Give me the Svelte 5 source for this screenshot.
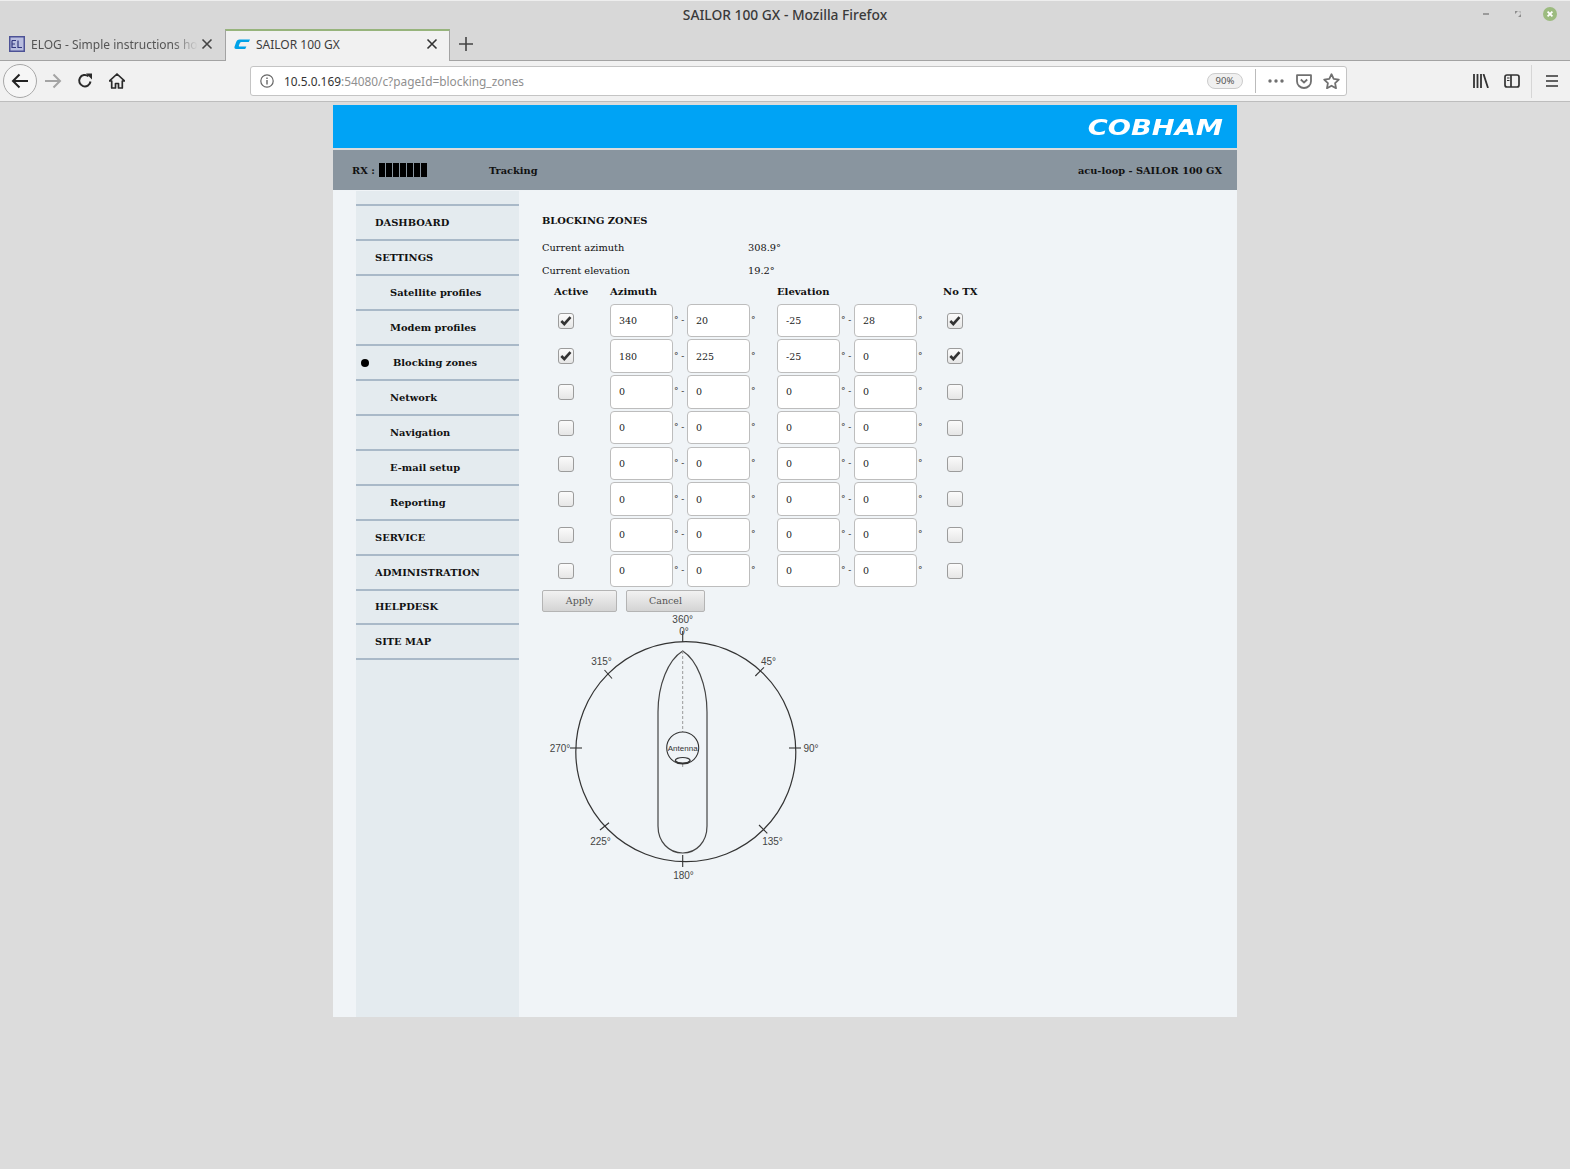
<script>
  const nav = [
    { label: 'DASHBOARD' }, { label: 'SETTINGS' },
    { label: 'Satellite profiles', sub: true }, { label: 'Modem profiles', sub: true },
    { label: 'Blocking zones', sub: true, current: true }, { label: 'Network', sub: true },
    { label: 'Navigation', sub: true }, { label: 'E-mail setup', sub: true },
    { label: 'Reporting', sub: true }, { label: 'SERVICE', tight: true }, { label: 'ADMINISTRATION', tight: true },
    { label: 'HELPDESK', tight: true }, { label: 'SITE MAP', tight: true }
  ];
  const rows = [
    { on: true, v: ['340', '20', '-25', '28'] },
    { on: true, v: ['180', '225', '-25', '0'] },
    ...Array.from({ length: 6 }, () => ({ on: false, v: ['0', '0', '0', '0'] }))
  ];
  const bars = [0, 1, 2, 3, 4, 5, 6];
  const labels = [
    ['360°', 682.7, 623], ['0°', 684, 635], ['315°', 601.5, 665], ['45°', 768.5, 665],
    ['270°', 560, 752], ['90°', 811, 752], ['225°', 600.5, 845], ['135°', 772.5, 845], ['180°', 683.5, 879]
  ];
  const ticks = [
    [682.7, 631, 682.7, 642], [682.7, 855, 682.7, 867], [570, 748, 582, 748], [789, 748, 801, 748],
    [604.5, 670, 612, 678.5], [755.3, 676, 764, 667.3], [759, 825, 767.3, 833.3], [600, 830, 609, 822.7]
  ];
</script>

<div class="chrome">
  <div class="titlebar">
    <span class="title">SAILOR 100 GX - Mozilla Firefox</span>
    <div class="winctl">
      <svg width="12" height="12" viewBox="0 0 12 12"><rect x="0" y="5" width="6" height="2" fill="#9a9a9a" transform="translate(3 0)"/></svg>
      <svg width="12" height="12" viewBox="0 0 12 12"><path d="M3 6V3h3zM9 6v3H6z" fill="#8d8d8d"/><path d="M6 3h3v3z" fill="#bbb"/></svg>
      <svg class="close" width="14" height="14" viewBox="0 0 14 14"><circle cx="7" cy="7" r="7" fill="#9cbb7f"/><path d="M4.6 4.6l4.8 4.8M9.4 4.6l-4.8 4.8" stroke="#fff" stroke-width="1.8"/></svg>
    </div>
  </div>
  <div class="tabs">
    <div class="tab">
      <svg class="fav" width="16" height="16" viewBox="0 0 16 16"><rect width="16" height="16" fill="#4d5296"/><rect x="1.5" y="1.5" width="13" height="13" fill="#b9bee0"/><path d="M3 4.5h4M3 4.5v7h4M3 8h3M9 4.5v7h4" fill="none" stroke="#33387f" stroke-width="1.2"/></svg>
      <span class="tabtext fade">ELOG - Simple instructions ho</span>
      <svg class="x" width="12" height="12" viewBox="0 0 12 12"><path d="M1.5 1.5l9 9M10.5 1.5l-9 9" stroke="#444" stroke-width="1.6"/></svg>
    </div>
    <div class="tab active">
      <svg class="fav" width="16" height="16" viewBox="0 0 16 16"><path d="M5.5 3.5H16l-1.2 2.6H7.6q-1.2 0-1.8 1.2L4.9 9.4q-.4 1.2.8 1.2h6.7L11.2 13H2.6Q-.3 13 .6 10.4l1.4-4Q2.9 3.5 5.500 3.500z" fill="#00a2e8"/></svg>
      <span class="tabtext">SAILOR 100 GX</span>
      <svg class="x" width="12" height="12" viewBox="0 0 12 12"><path d="M1.500 1.500l9 9M10.500 1.500l-9 9" stroke="#333" stroke-width="1.600"/></svg>
    </div>
    <svg class="plus" width="14" height="14" viewBox="0 0 14 14"><path d="M7 0v14M0 7h14" stroke="#444" stroke-width="1.600"/></svg>
  </div>
  <div class="toolbar">
    <div class="back"><svg width="18" height="16" viewBox="0 0 18 16"><path d="M17 8H2M8.500 1.500L2 8l6.500 6.500" fill="none" stroke="#222" stroke-width="2"/></svg></div>
    <svg class="fwd" width="18" height="16" viewBox="0 0 18 16"><path d="M1 8h15M9.500 1.500L16 8l-6.500 6.500" fill="none" stroke="#a4a4a4" stroke-width="2"/></svg>
    <svg class="reload" width="16" height="16" viewBox="0 0 16 16"><path d="M13.500 8.500A5.700 5.700 0 1 1 11.500 3.300" fill="none" stroke="#2a2a2a" stroke-width="2"/><path d="M9 0.500h6v6z" fill="#2a2a2a"/></svg>
    <svg class="home" width="16" height="16" viewBox="0 0 16 16"><path d="M8 1L0.500 8h2.200v7h3.800v-4.500h3V15h3.800V8h2.200z" fill="none" stroke="#2a2a2a" stroke-width="1.700" stroke-linejoin="round"/></svg>
    <div class="urlbar">
      <svg class="info" width="14" height="14" viewBox="0 0 14 14"><circle cx="7" cy="7" r="6.200" fill="none" stroke="#666" stroke-width="1.200"/><path d="M7 6v4.500M7 3.500v1.500" stroke="#666" stroke-width="1.400"/></svg>
      <span class="url"><b>10.5.0.169</b>:54080/c?pageId=blocking_zones</span>
      <span class="zoompill">90%</span>
      <span class="sep"></span>
      <svg class="dots" width="16" height="4" viewBox="0 0 16 4"><circle cx="2" cy="2" r="1.700"/><circle cx="8" cy="2" r="1.700"/><circle cx="14" cy="2" r="1.700"/></svg>
      <svg class="pocket" width="16" height="15" viewBox="0 0 16 15"><path d="M1 1.200h14v6a7 6.800 0 0 1-14 0z" fill="none" stroke="#707070" stroke-width="1.800" stroke-linejoin="round"/><path d="M4.800 5.500L8 8.500l3.200-3" fill="none" stroke="#707070" stroke-width="1.800"/></svg>
      <svg class="star" width="17" height="16" viewBox="0 0 17 16"><path d="M8.500 1.200l2.200 4.700 5.100.7-3.700 3.500.9 5.100-4.500-2.500-4.500 2.500.9-5.100L1.200 6.600l5.100-.7z" fill="none" stroke="#707070" stroke-width="1.800" stroke-linejoin="round"/></svg>
    </div>
    <svg class="lib" width="16" height="14" viewBox="0 0 16 14"><path d="M1 0v14M4.500 0v14M8 0v14M10.500 0l4.500 14" stroke="#333" stroke-width="1.800"/></svg>
    <svg class="side" width="16" height="14" viewBox="0 0 16 14"><rect x="1" y="1" width="14" height="12" rx="2" fill="none" stroke="#333" stroke-width="1.700"/><path d="M7 1v12" stroke="#333" stroke-width="1.700"/><path d="M3 4h2.500M3 6.500h2.500" stroke="#333" stroke-width="1.200"/></svg>
    <span class="toolsep"></span>
    <svg class="menu" width="12" height="12" viewBox="0 0 12 12"><path d="M0 1h12M0 6h12M0 11h12" stroke="#333" stroke-width="1.700"/></svg>
  </div>
</div>

<div class="page">
  <header class="brand"><span class="logo">COBHAM</span></header>
  <div class="status">
    <span class="rx">RX :</span>
    <span class="bars">{#each bars as b (b)}<i></i>{/each}</span>
    <span class="track">Tracking</span>
    <span class="device">acu-loop - SAILOR 100 GX</span>
  </div>
  <div class="main">
    <nav class="nav">
      {#each nav as n (n.label)}
        <div class="item" class:sub={n.sub} class:current={n.current} class:tight={n.tight}>
          {#if n.current}<span class="dot"></span>{/if}{n.label}
        </div>
      {/each}
    </nav>
    <section class="content">
      <h1>BLOCKING ZONES</h1>
      <div class="reading"><span>Current azimuth</span><span>308.9°</span></div>
      <div class="reading second"><span>Current elevation</span><span>19.2°</span></div>
      <div class="row head">
        <b class="h-active">Active</b><b>Azimuth</b><i></i><i></i><i></i><b>Elevation</b><i></i><i></i><i></i><b class="h-tx">No TX</b>
      </div>
      {#each rows as r, i (i)}
        <div class="row">
          <span class="cb" class:on={r.on}>{#if r.on}<svg width="12" height="10" viewBox="0 0 12 10"><path d="M1.300 5l3 3 6.200-6.800" fill="none" stroke="#333" stroke-width="2.600"/></svg>{/if}</span>
          <input type="text" value={r.v[0]} /><span class="unit">°&nbsp;-</span>
          <input type="text" value={r.v[1]} /><span class="unit">°</span>
          <input type="text" value={r.v[2]} /><span class="unit">°&nbsp;-</span>
          <input type="text" value={r.v[3]} /><span class="unit">°</span>
          <span class="cb" class:on={r.on}>{#if r.on}<svg width="12" height="10" viewBox="0 0 12 10"><path d="M1.300 5l3 3 6.200-6.800" fill="none" stroke="#333" stroke-width="2.600"/></svg>{/if}</span>
        </div>
      {/each}
      <div class="btns"><button class="apply">Apply</button><button class="cancel">Cancel</button></div>
      <svg class="diagram" width="280" height="280" viewBox="542 612 280 280">
        <circle cx="685.8" cy="751.7" r="110" fill="none" stroke="#333" stroke-width="1.200"/>
        <path d="M682.700 651C668 660 658 685 658 712V826C658 842 669 853 682.700 853S707 842 707 826V712C707 685 697 660 682.700 651z" fill="none" stroke="#444" stroke-width="1.200"/>
        <path d="M682.700 651V732M682.700 764V767" stroke="#999" stroke-width="1" stroke-dasharray="3 2"/>
        <circle cx="682.700" cy="748" r="16" fill="none" stroke="#333" stroke-width="1.100"/>
        <ellipse cx="682.700" cy="760.500" rx="7.500" ry="3" fill="none" stroke="#333" stroke-width="1.100"/>
        <path d="M675.500 760.500a7.500 3.500 0 0 0 14.400 0" fill="none" stroke="#333" stroke-width="1.100"/>
        {#each ticks as t, i (i)}<line x1={t[0]} y1={t[1]} x2={t[2]} y2={t[3]} stroke="#333" stroke-width="1.100"/>{/each}
        {#each labels as l (l[0])}<text x={l[1]} y={l[2]} text-anchor="middle" class="lbl">{l[0]}</text>{/each}
        <text x="682.700" y="750.500" text-anchor="middle" class="ant">Antenna</text>
      </svg>
    </section>
  </div>
</div>

<style>
  :global(body) { margin: 0; background: #dcdcdc; }
  .chrome { font-family: "Noto Sans", sans-serif; background: #d8d8d8; border-top: 1px solid #eee; box-sizing: border-box; height: 102px; color: #333; }
  .titlebar { height: 28px; box-sizing: border-box; padding-bottom: 1px; position: relative; display: flex; align-items: center; justify-content: center; }
  .title { font-size: 13.800px; font-weight: 500; color: #3a3a3a; }
  .winctl { position: absolute; right: 13px; top: 6px; display: flex; align-items: center; gap: 20px; }
  .winctl .close { margin-left: -1px; }
  .tabs { height: 32px; display: flex; align-items: center; border-bottom: 1px solid #a3a3a3; box-sizing: border-box; }
  .tab { width: 225px; height: 32px; display: flex; align-items: center; padding-left: 9px; padding-bottom: 1px; box-sizing: border-box; position: relative; }
  .tabtext { font-size: 12px; color: #3d3d3d; white-space: nowrap; margin-left: 6px; }
  .fade { color: #555; mask-image: linear-gradient(90deg, #000 85%, transparent 100%); -webkit-mask-image: linear-gradient(90deg, #000 85%, transparent 100%); }
  .tab .x { position: absolute; left: 201px; }
  .tab.active { background: #f1f1f1; border-top: 2px solid #97b47c; border-left: 1px solid #a3a3a3; border-right: 1px solid #a3a3a3; height: 33px; margin-bottom: -1px; padding-left: 8px; padding-bottom: 4px; }
  .tab.active .x { left: 200px; }
  .plus { margin-left: 9px; margin-bottom: 1px; }
  .toolbar { height: 41px; box-sizing: border-box; background: #f1f1f1; border-bottom: 1px solid #bdbdbd; display: flex; align-items: center; position: relative; }
  .back { width: 32px; height: 32px; border: 1px solid #a8a8a8; border-radius: 50%; background: #f6f6f6; margin-left: 3px; display: flex; align-items: center; justify-content: center; }
  .fwd { margin-left: 7px; }
  .reload { margin-left: 15px; }
  .home { margin-left: 16px; }
  .urlbar { margin-left: 125px; width: 1097px; height: 30px; box-sizing: border-box; background: #fff; border: 1px solid #c4c4c4; border-radius: 3px; display: flex; align-items: center; position: relative; }
  .info { margin-left: 9px; }
  .url { font-size: 11.850px; color: #8f8f8f; margin-left: 10px; }
  .url b { font-weight: 400; color: #333; }
  .zoompill { margin-left: auto; width: 36px; height: 16px; border: 1px solid #ccc; border-radius: 8px; background: #f0f0f0; font-size: 9.500px; text-align: center; color: #555; box-sizing: border-box; line-height: 14px; }
  .sep { width: 1px; height: 24px; background: #bbb; margin-left: 12px; }
  .dots { margin-left: 12px; fill: #707070; }
  .pocket { margin-left: 12px; }
  .star { margin-left: 11px; margin-right: 6px; }
  .lib { margin-left: 126px; }
  .side { margin-left: 15px; }
  .toolsep { width: 1px; height: 33px; background: #d6d6d6; margin-left: 11px; }
  .menu { margin-left: 14px; }

  .page { width: 904px; margin: 3px auto 0; font-family: "DejaVu Serif", serif; color: #111; }
  .brand { height: 43px; background: #00a3f5; display: flex; align-items: center; justify-content: flex-end; }
  .logo { color: #fff; font-family: "DejaVu Sans", sans-serif; font-style: italic; font-weight: 700; font-size: 22px; line-height: 1; display: inline-block; transform: scaleX(1.24); transform-origin: right center; margin-right: 14px; margin-top: 3px; }
  .status { margin-top: 2px; height: 40px; background: #89959f; display: flex; align-items: center; font-size: 9.800px; font-weight: 700; padding: 0 15px 0 19px; }
  .rx { width: 27px; }
  .bars { display: flex; gap: 1px; width: 110px; }
  .bars i { width: 6px; height: 14px; background: #000; }
  .device { margin-left: auto; }
  .main { height: 827px; background: #f0f4f7; display: flex; padding-left: 23px; padding-top: 1px; box-sizing: border-box; }
  .nav { width: 163px; background: #e4ebef; padding-top: 13px; box-sizing: border-box; flex: none; }
  .nav::before { content: ""; display: block; height: 2px; background: #a9b9c8; }
  .item { height: 35px; box-sizing: border-box; border-bottom: 2px solid #a9b9c8; padding-left: 19px; font-size: 9.900px; font-weight: 700; display: flex; align-items: center; position: relative; color: #111; }
  .item.tight { height: 34.750px; }
  .item.sub { padding-left: 34px; }
  .item.current { padding-left: 37px; }
  .dot { position: absolute; left: 5px; top: 13px; width: 8px; height: 8px; border-radius: 50%; background: #000; }
  .content { flex: 1; padding-left: 23px; font-size: 9.800px; }
  h1 { font-size: 9.900px; font-weight: 700; margin: 23px 0 0; line-height: 13px; }
  .reading { display: flex; margin-top: 14px; line-height: 13px; }
  .reading.second { margin-top: 10px; }
  .reading span:first-child { width: 206px; }
  .row { display: grid; grid-template-columns: 68px 63px 14px 63px 27px 63px 14px 63px 30px 40px; height: 35.750px; align-items: center; box-sizing: border-box; }
  .row.head { height: 14px; margin-top: 8px; margin-bottom: 3.500px; line-height: 14px; font-size: 10px; font-weight: 700; }
  .row.head b { white-space: nowrap; }
  .row.head i { display: block; }
  .h-active { padding-left: 12px; }
  .h-tx { margin-left: -4px; }
  .cb { width: 16px; height: 16px; box-sizing: border-box; border: 1px solid #9c9c9c; border-radius: 3px; background: linear-gradient(#fbfbfb, #e6e6e6); margin-left: 16px; margin-top: 0.600px; display: flex; align-items: center; justify-content: center; }
  .row > .cb:last-child { margin-left: 0; }
  input { width: 63px; height: 33.500px; box-sizing: border-box; border: 1px solid #bdbdbd; border-radius: 4px; background: #fff; padding: 0 0 0 8px; font: 400 9.500px "DejaVu Serif", serif; color: #222; outline: none; margin: 0; }
  .unit { font-size: 9px; padding-left: 1px; margin-top: -1px; color: #333; white-space: nowrap; }
  .btns { display: flex; gap: 9px; margin-top: 1.700px; }
  button { height: 22px; box-sizing: border-box; border: 1px solid #b4b4b4; border-radius: 2px; background: linear-gradient(#f2f2f2, #d4d4d4); font: 400 9.500px "DejaVu Serif", serif; color: #555; padding: 0 0 1px; }
  .apply { width: 75px; }
  .cancel { width: 79px; }
  .diagram { display: block; }
  .lbl { font: 400 10px "Liberation Sans", sans-serif; fill: #444; }
  .ant { font: 400 8px "Liberation Sans", sans-serif; fill: #333; }
</style>
